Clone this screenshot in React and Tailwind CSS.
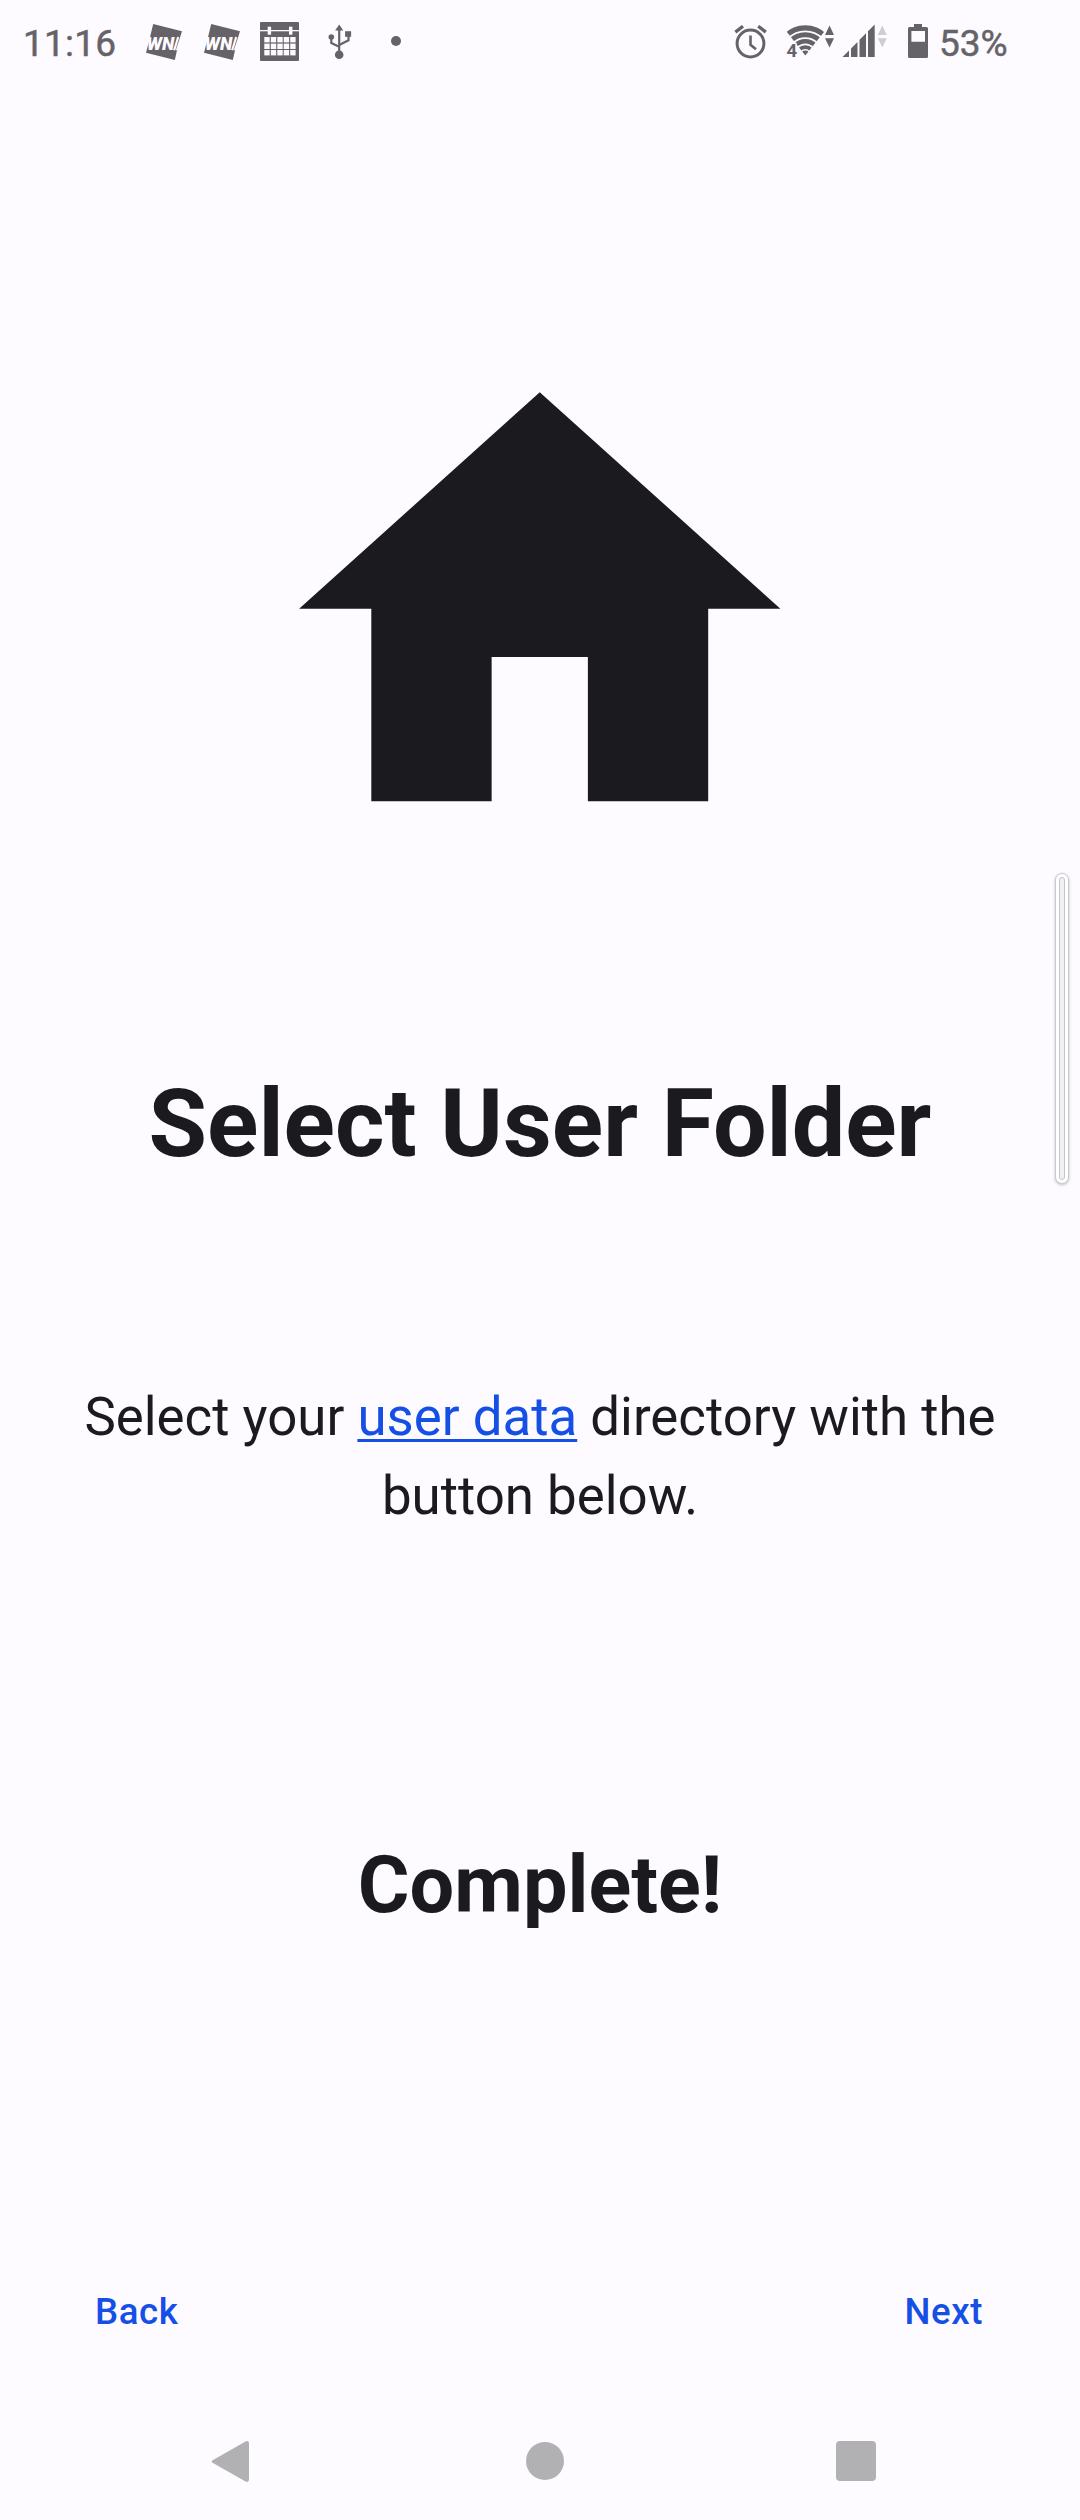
import React from "react";

function StoreIcon({ className }) {
  return (
    <svg width="37" height="37" viewBox="146 24 37 37" className={className}>
      <path d="M153.2 24L182 31.3L180.2 37L175.8 50.3H177L174.8 60L146 52.8L148.6 43Z" fill="#656367" />
      <path d="M178.2 37L174.2 50.3" stroke="#fdfbff" strokeWidth="2.2" />
      <text x="146.8" y="50.2" fontSize="18.4" fontWeight="900" fontStyle="italic" fontFamily="Roboto, sans-serif" fill="#fdfbff" textLength="27.5" lengthAdjust="spacingAndGlyphs">WN</text>
    </svg>
  );
}

function CalendarIcon({ className }) {
  const cols = [264.3, 270.8, 277.3, 283.7, 290.2];
  const rows = [37, 43.6, 50];
  return (
    <svg width="39" height="39" viewBox="260 22 39 39" className={className}>
      <rect x="260" y="22" width="39" height="39" rx="1" fill="#656367" />
      <g fill="#fdfbff">
        <rect x="260" y="30" width="39" height="1.3" />
        <rect x="267.7" y="26.7" width="3.4" height="8" />
        <rect x="289" y="26.7" width="3.4" height="8" />
        {rows.map((y) => cols.map((x) => <rect key={`${x}-${y}`} x={x} y={y} width="5.4" height="5.4" />))}
      </g>
    </svg>
  );
}

function UsbIcon({ className }) {
  return (
    <svg width="24" height="36" viewBox="327.5 24 24 36" className={className}>
      <g fill="none" stroke="#656367" strokeWidth="2.2">
        <path d="M338.7 29V54" />
        <path d="M330.8 37V43L338.7 46.8" />
        <path d="M348 36V40.3L338.7 45" />
      </g>
      <g fill="#656367">
        <path d="M338.7 24.6L342.8 30.5H334.6Z" />
        <circle cx="330.8" cy="37" r="2.8" />
        <rect x="344.6" y="31.2" width="6" height="5.6" />
        <circle cx="338.7" cy="54.7" r="4.3" />
      </g>
    </svg>
  );
}

function AlarmIcon({ className }) {
  return (
    <svg width="33" height="34" viewBox="734 24.5 33 34" className={className} fill="none" stroke="#656367">
      <circle cx="750.5" cy="43" r="13.4" strokeWidth="3" />
      <path d="M750.5 35V44.3L756 48.8" strokeWidth="2.6" />
      <path d="M735.4 31.6L743 25.7M765.8 31.6L758.2 25.7" strokeWidth="3.3" />
    </svg>
  );
}

function WifiIcon({ className }) {
  return (
    <svg width="49" height="36" viewBox="786 24 49 36" overflow="visible" className={className}>
      <clipPath id="fan">
        <path d="M805.3 55.5L783 27V20H828V27Z" />
      </clipPath>
      <g clipPath="url(#fan)" fill="none" stroke="#656367">
        <circle cx="805.3" cy="55.5" r="27.6" strokeWidth="5.2" />
        <circle cx="805.3" cy="55.5" r="20.8" strokeWidth="5" />
        <circle cx="805.3" cy="55.5" r="14.2" strokeWidth="4.4" />
        <circle cx="805.3" cy="55.5" r="8.4" strokeWidth="3.8" />
        <circle cx="805.3" cy="55.5" r="2.5" strokeWidth="5" />
      </g>
      <text x="786.6" y="57.3" fontSize="18.5" fontWeight="700" fontFamily="Roboto, sans-serif" fill="#656367" stroke="#fdfbff" strokeWidth="2.5" paintOrder="stroke">4</text>
      <path d="M829.5 25.6L834 35H825ZM829.5 47.6L834 38.2H825Z" fill="#656367" />
    </svg>
  );
}

function SignalIcon({ className }) {
  return (
    <svg width="45" height="34" viewBox="842 24 45 34" className={className}>
      <path d="M842.5 57L849 50.5V57ZM851 48.5L857.5 42V57H851ZM859.5 39.8L866 33.2V57H859.5ZM868 31.2L874.7 24.4V57H868Z" fill="#656367" />
      <path d="M882.3 25.6L886.8 35H877.8ZM882.3 47.6L886.8 38.2H877.8Z" fill="#cfcdd1" />
    </svg>
  );
}

function BatteryIcon({ className }) {
  return (
    <svg width="20" height="34" viewBox="908 24 20 34" className={className}>
      <path d="M914 24H922V27H926.5Q928 27 928 28.5V56.5Q928 58 926.5 58H909.5Q908 58 908 56.5V28.5Q908 27 909.5 27H914ZM911.4 31V41.7H925V31Z" fill="#656367" fillRule="evenodd" />
    </svg>
  );
}

function StatusBar() {
  return (
    <div className="flex h-[84px] items-start text-[37px] leading-[44px] text-[#656367] [-webkit-text-stroke:0.5px_#656367]">
      <span className="mt-[22px] ml-[23px] w-[123px] tracking-[0.2px]">11:16</span>
      <StoreIcon className="mt-6" />
      <StoreIcon className="mt-6 ml-[21px]" />
      <CalendarIcon className="mt-[22px] ml-[19px]" />
      <UsbIcon className="mt-6 ml-[28.5px]" />
      <div className="mt-9 ml-[39.5px] size-[10px] rounded-full bg-[#656367]" />
      <div className="ml-auto flex items-start">
        <AlarmIcon className="mt-[24.5px]" />
        <WifiIcon className="mt-6 ml-[19px]" />
        <SignalIcon className="mt-6 ml-[7px]" />
        <BatteryIcon className="mt-6 ml-[21px]" />
        <span className="mt-[22px] ml-[11px] w-[141px]">53%</span>
      </div>
    </div>
  );
}

function NavigationBar() {
  return (
    <div className="mt-auto flex h-[118px] items-center">
      <svg width="39" height="43" viewBox="0 0 39 43" className="ml-[211px]">
        <path d="M2 20L34.5 1.5Q38 0 38 3.5V39.5Q38 43 34.5 41.5L2 23Q-.8 21.5 2 20Z" fill="#b1b1b3" />
      </svg>
      <div className="ml-[276px] size-[38px] rounded-full bg-[#b1b1b3]" />
      <div className="ml-[272px] size-[40px] rounded-[4px] bg-[#b1b1b3]" />
    </div>
  );
}

export default function App() {
  return (
    <div className="relative flex h-[2520px] w-[1080px] flex-col overflow-hidden bg-[#fdfbff] font-[Roboto,sans-serif] text-[#1b1b1f]">
      <StatusBar />

      <main className="flex flex-col items-center text-center">
        <svg viewBox="0 0 24 24" className="mt-[236.3px] size-[577.5px]" fill="#1b1b1f">
          <path d="M10 20v-6h4v6h5v-8h3L12 3 2 12h3v8z" />
        </svg>
        <h1 className="mt-[171.2px] text-[95.1px] leading-[110px] font-bold whitespace-nowrap">Select User Folder</h1>
        <p className="mt-[199px] w-[961px] text-[52.8px] leading-[79px]">
          Select your{" "}
          <a className="text-[#154fe6] underline decoration-[3px] underline-offset-[4px] [text-decoration-skip-ink:none]">user data</a>{" "}
          directory with the button below.
        </p>
        <h2 className="mt-[304px] text-[79.2px] leading-[90px] font-bold">Complete!</h2>
      </main>

      <div className="mt-[360px] flex justify-between pr-[97px] pl-[95px] text-[36.6px] leading-[44px] font-medium tracking-[0.6px] text-[#154fe6]">
        <button>Back</button>
        <button>Next</button>
      </div>

      <NavigationBar />

      {/* edge panel handle */}
      <div className="absolute top-[873px] left-[1055px] h-[311px] w-[14px] rounded-full border border-[#c9c8cc] bg-white p-[3px] shadow-[0_1px_3px_rgba(0,0,0,0.25)]">
        <div className="h-full rounded-full border border-[#c4c4c9] bg-[#f1f1f5]" />
      </div>
    </div>
  );
}
